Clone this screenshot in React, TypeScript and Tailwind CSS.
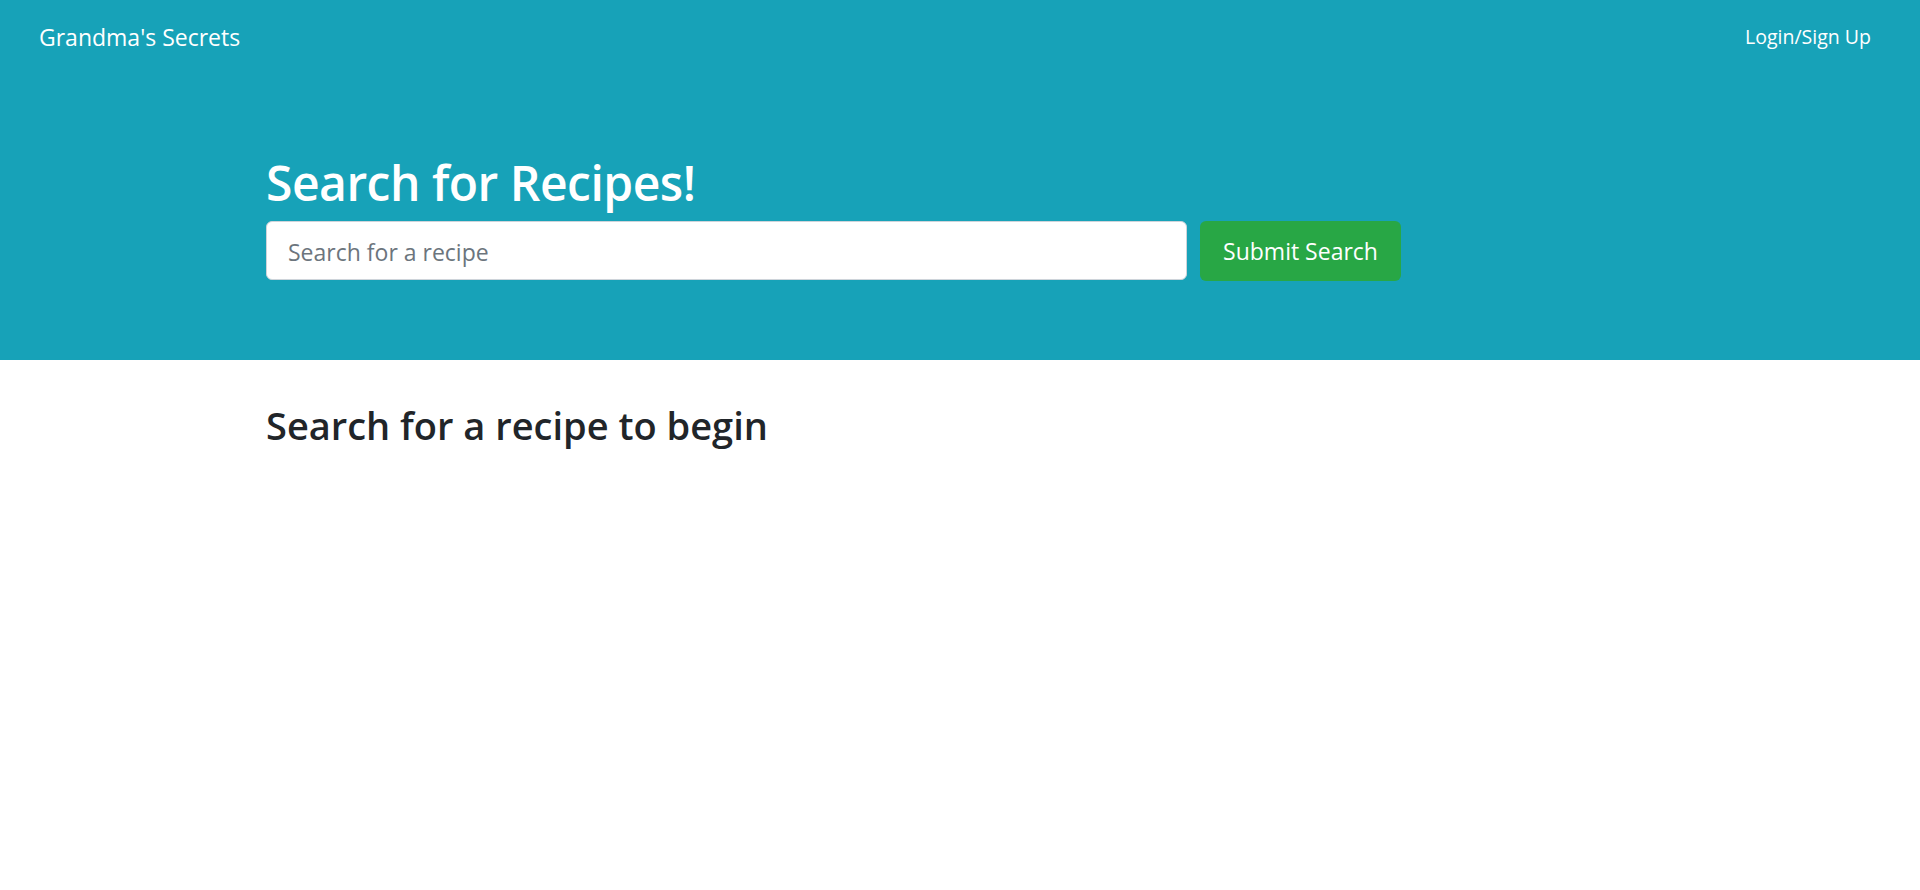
export default function App() {
  return (
    <div className="min-h-[890px] bg-white font-['Open_Sans','Noto_Sans',sans-serif]">
      <header className="bg-[#17a2b8] h-[360px] flex flex-col">
        <nav className="h-[74px] flex items-center justify-between pl-[39px] pr-[49px]">
          <a href="#" className="text-white text-[23px] leading-none">
            Grandma's Secrets
          </a>
          <a href="#" className="text-white text-[19.5px] leading-none">
            Login/Sign Up
          </a>
        </nav>
        <div className="w-[1388px] ml-[266px] pt-[77px]">
          <h1 className="text-white text-[48px] font-semibold leading-[64px] tracking-[-0.5px]">
            Search for Recipes!
          </h1>
          <form className="flex gap-[13px] mt-[6px]" onSubmit={(e) => e.preventDefault()}>
            <input
              type="text"
              placeholder="Search for a recipe"
              className="w-[921px] h-[59px] bg-white rounded-[6px] border border-[#ced4da] px-[21px] pt-[2px] text-[23px] text-[#495057] placeholder:text-[#6c757d] outline-none"
            />
            <button
              type="submit"
              className="w-[201px] h-[60px] bg-[#28a745] rounded-[6px] text-white text-[23px]"
            >
              Submit Search
            </button>
          </form>
        </div>
      </header>
      <main className="ml-[266px] pt-[41px]">
        <h2 className="text-[#212529] text-[38px] font-semibold leading-[48px]">
          Search for a recipe to begin
        </h2>
      </main>
    </div>
  );
}
